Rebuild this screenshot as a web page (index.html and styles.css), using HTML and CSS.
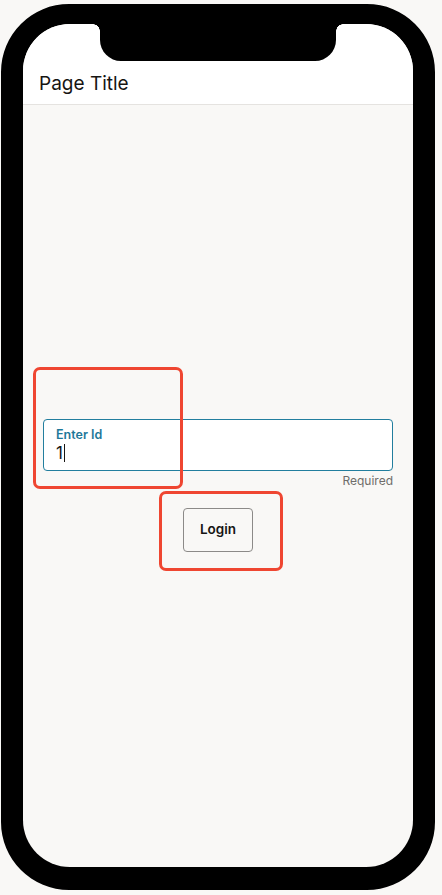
FILE: index.html
```html
<!DOCTYPE html>
<html lang="en">
<head>
<meta charset="utf-8">
<title>Page Title</title>
<link rel="stylesheet" href="styles.css">
</head>
<body>
<div class="phone">
  <div class="screen">
    <div class="notch"></div>
    <header class="app-header">
      <h1 class="title">Page Title</h1>
    </header>
    <main class="content">
      <div class="field">
        <div class="field-box">
          <label class="field-label">Enter Id</label>
          <div class="field-value">1<span class="caret"></span></div>
        </div>
        <div class="field-help">Required</div>
      </div>
      <button class="btn" type="button">Login</button>
    </main>
    <div class="mark mark-field"></div>
    <div class="mark mark-button"></div>
  </div>
</div>
</body>
</html>
```
FILE: styles.css
```css
* { box-sizing: border-box; }
html, body { margin: 0; padding: 0; }
body {
  background: #f9f8f6;
  font-family: Inter, "Noto Sans", "Liberation Sans", sans-serif;
  color: #161513;
}
.phone {
  margin: 4px 0 0 1px;
  width: 434px;
  height: 886px;
  border-style: solid;
  border-color: #000;
  border-width: 20px 22px 23px 22px;
  border-radius: 68px;
  background: #000;
}
.screen {
  position: relative;
  width: 390px;
  height: 843px;
  border-radius: 47px;
  overflow: hidden;
  background: #f9f8f6;
  display: flex;
  flex-direction: column;
}
.notch {
  position: absolute;
  top: 0;
  left: 77px;
  width: 236px;
  height: 37px;
  background: #000;
  border-radius: 0 0 21px 21px;
  z-index: 2;
}
.notch::before, .notch::after {
  content: "";
  position: absolute;
  top: 0;
  width: 7px;
  height: 7px;
}
.notch::before {
  left: -7px;
  background: radial-gradient(circle at 0 100%, transparent 6.5px, #000 7px);
}
.notch::after {
  right: -7px;
  background: radial-gradient(circle at 100% 100%, transparent 6.5px, #000 7px);
}
.app-header {
  height: 81px;
  background: #fff;
  border-bottom: 1px solid #e5e3e0;
  display: flex;
  align-items: flex-end;
  padding: 0 16px 8px;
  flex-shrink: 0;
}
.title {
  margin: 0;
  font-size: 19px;
  font-weight: 400;
  line-height: 24px;
  color: #161513;
}
.content {
  flex: 1;
  display: flex;
  flex-direction: column;
  align-items: center;
  justify-content: center;
  padding: 0 20px 2px;
}
.field {
  width: 100%;
  display: flex;
  flex-direction: column;
}
.field-box {
  height: 52px;
  background: #fff;
  border: 1px solid #227e9e;
  border-radius: 4px;
  padding: 7px 12px 0;
  display: flex;
  flex-direction: column;
}
.field-label {
  font-size: 12.5px;
  font-weight: 600;
  line-height: 16px;
  color: #1d7899;
}
.field-value {
  font-size: 17px;
  line-height: 20px;
  color: #161513;
  display: flex;
  align-items: center;
}
.caret {
  display: inline-block;
  width: 1px;
  height: 18px;
  background: #161513;
  margin-left: 1px;
}
.field-help {
  text-align: right;
  font-size: 12px;
  line-height: 16px;
  color: #6f6d6a;
  padding-top: 2px;
}
.btn {
  margin-top: 19px;
  width: 70px;
  height: 44px;
  background: #f9f8f6;
  border: 1px solid #8c8a88;
  border-radius: 4px;
  font-family: inherit;
  font-size: 13.5px;
  font-weight: 600;
  color: #161513;
  padding: 0 0 2px;
}
.mark {
  position: absolute;
  border: 3px solid #ef4631;
  border-radius: 7px;
  z-index: 3;
}
.mark-field {
  left: 10px;
  top: 343px;
  width: 150px;
  height: 122px;
}
.mark-button {
  left: 136px;
  top: 467px;
  width: 124px;
  height: 80px;
}
```
